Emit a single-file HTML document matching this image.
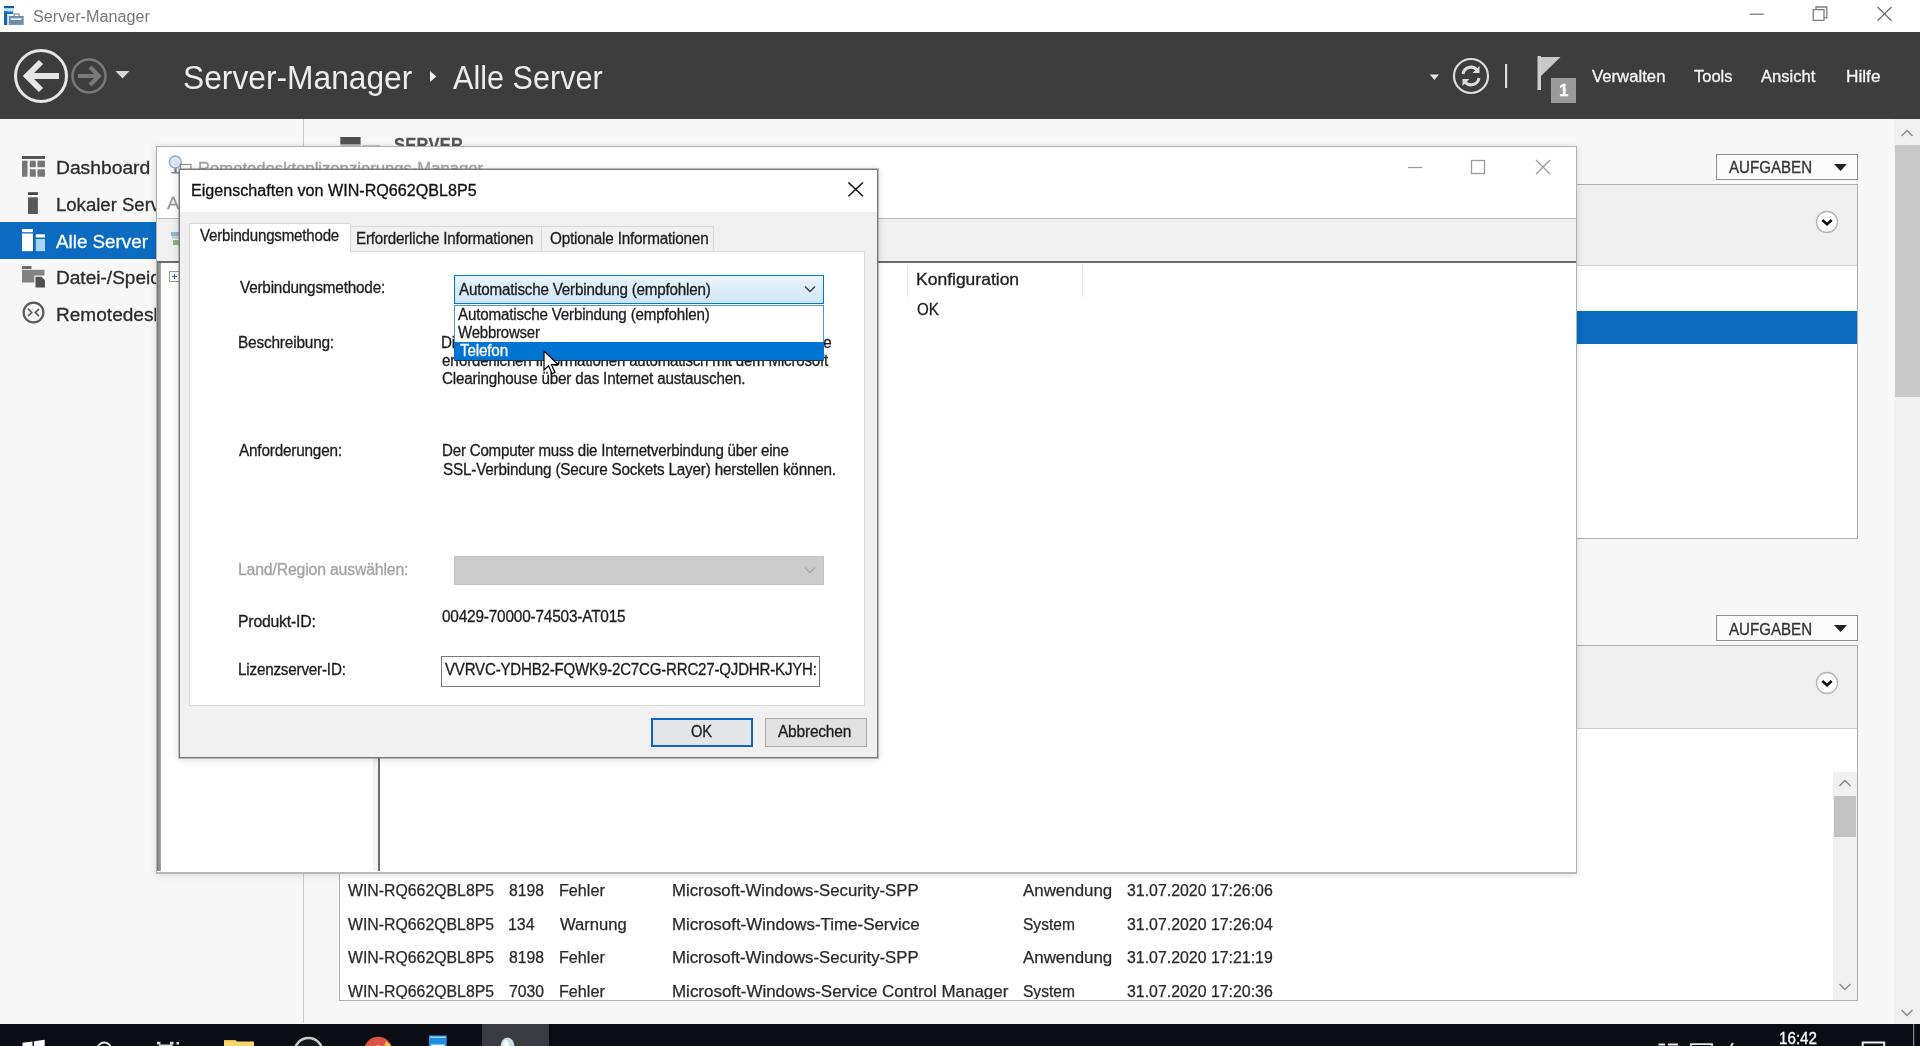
<!DOCTYPE html>
<html lang="de">
<head>
<meta charset="utf-8">
<title>Server-Manager</title>
<style>
*{box-sizing:border-box;margin:0;padding:0}
html,body{width:1920px;height:1046px;overflow:hidden;background:#f7f7f7;font-family:"Liberation Sans",sans-serif;color:#222}
.a{position:absolute}
.t{position:absolute;white-space:nowrap;transform-origin:0 50%;line-height:1;-webkit-text-stroke:.3px currentColor}
#titlebar{left:0;top:0;width:1920px;height:32px;background:#fff}
#header{left:0;top:32px;width:1920px;height:87px;background:#3d3d3d}
#content{left:0;top:119px;width:1920px;height:904px;background:#f7f7f7}
#sidebar{left:0;top:119px;width:304px;height:904px;background:#f7f7f7;border-right:1px solid #c9c9c9}
#taskbar{left:0;top:1023.500px;width:1920px;height:23px;background:#0b0d15}
.nav{position:absolute;left:0;width:304px;height:36px}
.nav .t{left:56px;top:8px;font-size:18.7px;color:#2b2b2b}
.nav.sel{background:#0a6bc1}
.nav.sel .t{color:#fff}
.btn{width:142px;height:25.500px;border:1px solid #8f8f8f;background:#fbfbfb}
/* dialog text */
.d{position:absolute;white-space:nowrap;-webkit-text-stroke:.3px currentColor;font-size:16px;color:#1c1c1c;transform-origin:0 50%;line-height:18px;letter-spacing:-0.2px}
.ev{position:absolute;white-space:nowrap;-webkit-text-stroke:.25px currentColor;font-size:15.8px;color:#2a2a2a;line-height:20px;transform-origin:0 50%}
</style>
</head>
<body>
<div class="a" id="root" style="left:0;top:0;width:1920px;height:1046px;filter:blur(0.5px)">
<div class="a" style="left:-12px;top:-12px;width:1944px;height:44px;background:#fff"></div>
<div class="a" style="left:-12px;top:119px;width:1944px;height:910px;background:#f7f7f7"></div>
<div class="a" style="left:1894px;top:119px;width:38px;height:905px;background:#f0f0f0"></div>
<div class="a" style="left:1895px;top:145px;width:37px;height:252px;background:#c9c9c9"></div>
<div class="a" style="left:-12px;top:32px;width:1944px;height:87px;background:#3d3d3d"></div>
<div class="a" style="left:-12px;top:1023.500px;width:1944px;height:35px;background:#0b0d15"></div>
<div class="a" id="content">
<svg class="a" style="left:340px;top:17.600px" width="44" height="12"><rect x="0.300" y="0" width="20.300" height="7.400" fill="#505050"/><rect x="0.300" y="7.400" width="20.300" height="1.200" fill="#9a9a9a"/><rect x="22" y="8.300" width="18" height="1" fill="#aaa"/></svg>
<div class="t" id="c1" style="left:393.75px;top:17.96px;transform:scaleX(0.9420);font-size:17.5px;font-weight:bold;color:#555;letter-spacing:.3px">SERVER</div>
<!-- server tile -->
<div class="a" style="left:339px;top:65px;width:1519px;height:355px;background:#fff;border:1px solid #adadad"></div>
<div class="a" style="left:340px;top:66px;width:1517px;height:81px;background:#efefef;border-bottom:1px solid #cfcfcf"></div>
<div class="a" style="left:340px;top:192px;width:1517px;height:33px;background:#0a6bc1"></div>
<div class="a btn" style="left:1716px;top:35px"><div class="t" id="b1" style="left:11.50px;top:5.00px;transform:scaleX(0.9433);font-size:16px;color:#333">AUFGABEN</div><svg class="a" style="left:116px;top:8px" width="16" height="10"><path d="M1 1h13l-6.500 7z" fill="#222"/></svg></div>
<svg class="a" style="left:1815px;top:91px" width="24" height="24"><circle cx="12" cy="12" r="10.500" fill="#fff" stroke="#b5b5b5" stroke-width="1.300"/><path d="M7.300 10l4.700 4.200 4.700-4.200" fill="none" stroke="#111" stroke-width="2.600"/></svg>
<!-- events tile -->
<div class="a" style="left:339px;top:526px;width:1519px;height:356px;background:#fff;border:1px solid #adadad"></div>
<div class="a" style="left:340px;top:527px;width:1517px;height:82.500px;background:#efefef;border-bottom:1px solid #cfcfcf"></div>
<div class="a btn" style="left:1716px;top:496px"><div class="t" id="b2" style="left:11.50px;top:5.50px;transform:scaleX(0.9433);font-size:16px;color:#333">AUFGABEN</div><svg class="a" style="left:116px;top:8px" width="16" height="10"><path d="M1 1h13l-6.500 7z" fill="#222"/></svg></div>
<svg class="a" style="left:1815px;top:552px" width="24" height="24"><circle cx="12" cy="12" r="10.500" fill="#fff" stroke="#b5b5b5" stroke-width="1.300"/><path d="M7.300 10l4.700 4.200 4.700-4.200" fill="none" stroke="#111" stroke-width="2.600"/></svg>
<!-- inner scrollbar -->
<div class="a" style="left:1833px;top:653px;width:24px;height:228px;background:#f0f0f0"></div>
<div class="a" style="left:1834px;top:677px;width:22px;height:41px;background:#c2c2c2"></div>
<svg class="a" style="left:1837px;top:658px" width="16" height="12"><path d="M2.500 9l5.500-5.500L13.500 9" fill="none" stroke="#8a8a8a" stroke-width="1.500"/></svg>
<svg class="a" style="left:1837px;top:862px" width="16" height="12"><path d="M2.500 3l5.500 5.500L13.500 3" fill="none" stroke="#8a8a8a" stroke-width="1.500"/></svg>
<!-- main scrollbar -->
<div class="a" style="left:1894px;top:0;width:26px;height:904px;background:#f0f0f0"></div>
<div class="a" style="left:1895px;top:26px;width:25px;height:252px;background:#c9c9c9"></div>
<svg class="a" style="left:1899px;top:8px" width="16" height="12"><path d="M2.500 9l5.500-5.500L13.500 9" fill="none" stroke="#8a8a8a" stroke-width="1.500"/></svg>
<svg class="a" style="left:1899px;top:888px" width="16" height="12"><path d="M2.500 3l5.500 5.500L13.500 3" fill="none" stroke="#8a8a8a" stroke-width="1.500"/></svg>
</div>
<div class="a" id="sidebar">
<div class="nav" style="top:31px"><svg class="a" style="left:22px;top:6px" width="24" height="22"><rect x="0" y="0" width="23" height="3" fill="#555"/><rect x="0" y="4.700" width="5.500" height="16" fill="#767676"/><rect x="7.800" y="4.700" width="6" height="6.500" fill="#767676"/><rect x="15.500" y="4.700" width="7.500" height="6.500" fill="#767676"/><rect x="7.800" y="13.300" width="6" height="7.400" fill="#767676"/><rect x="15.500" y="13.300" width="7.500" height="7.400" fill="#767676"/></svg><div class="t" id="n1" style="left:56.18px;top:9.16px;transform:scaleX(1.0308)">Dashboard</div></div>
<div class="nav" style="top:68px"><svg class="a" style="left:27px;top:5px" width="12" height="24"><rect x="1" y="0.200" width="9.900" height="2.800" fill="#444"/><rect x="1" y="5.300" width="9.900" height="16.700" fill="#595959"/></svg><div class="t" id="n2" style="left:56.21px;top:9.35px;transform:scaleX(0.9920)">Lokaler Server</div></div>
<div class="nav sel" style="top:103.200px;height:36.400px"><svg class="a" style="left:22px;top:6.600px" width="24" height="24"><rect x="0" y="0" width="11" height="3.200" fill="#fff"/><rect x="0" y="4.500" width="11" height="17.700" fill="#fff"/><rect x="13.800" y="5.300" width="9.200" height="3.200" fill="#fff"/><rect x="13.800" y="10" width="9.200" height="12.200" fill="#a9d3f5"/></svg><div class="t" id="n3" style="left:56.30px;top:10.57px;transform:scaleX(1.0058)">Alle Server</div></div>
<div class="nav" style="top:141px"><svg class="a" style="left:22px;top:5.700px" width="25" height="24"><rect x="0" y="0" width="9.500" height="3" fill="#6b6b6b"/><rect x="0" y="3.800" width="22.500" height="12.700" fill="#828282"/><rect x="12.300" y="9.500" width="11.700" height="13" fill="#f7f7f7"/><path d="M13.500 10.700h6l3.500 3.500v7.400h-9.500z" fill="#505050"/></svg><div class="t" id="n4" style="left:56.19px;top:9.16px;transform:scaleX(1.0200)">Datei-/Speicherdienste</div></div>
<div class="nav" style="top:178px"><svg class="a" style="left:21.700px;top:4.200px" width="24" height="24"><circle cx="11.500" cy="11.500" r="9.900" fill="none" stroke="#5a5a5a" stroke-width="2.200"/><path d="M6 7.800l3.700 3.700-3.700 3.700M17 7.800l-3.700 3.700 3.700 3.700" fill="none" stroke="#5a5a5a" stroke-width="1.700"/></svg><div class="t" id="n5" style="left:56.19px;top:8.85px;transform:scaleX(1.0200)">Remotedesktopdienste</div></div>
</div>
<div class="a" id="events" style="left:340px;top:870px;width:1493px;height:128.600px;overflow:hidden">
<div class="ev" id="e00" style="left:7.50px;top:10.75px;transform:scaleX(1.0021)">WIN-RQ662QBL8P5</div><div class="ev" id="e01" style="left:169.25px;top:10.75px;transform:scaleX(0.9970)">8198</div><div class="ev" id="e02" style="left:218.99px;top:10.75px;transform:scaleX(1.0226)">Fehler</div><div class="ev" id="e03" style="left:332.25px;top:10.75px;transform:scaleX(1.0603)">Microsoft-Windows-Security-SPP</div><div class="ev" id="e04" style="left:683.30px;top:10.75px;transform:scaleX(1.0695)">Anwendung</div><div class="ev" id="e05" style="left:787.30px;top:10.75px;transform:scaleX(1.0058)">31.07.2020 17:26:06</div>
<div class="ev" id="e10" style="left:7.50px;top:44.50px;transform:scaleX(1.0021)">WIN-RQ662QBL8P5</div><div class="ev" id="e11" style="left:168.25px;top:44.50px;transform:scaleX(1.0070)">134</div><div class="ev" id="e12" style="left:220.00px;top:44.50px;transform:scaleX(1.0522)">Warnung</div><div class="ev" id="e13" style="left:332.24px;top:44.50px;transform:scaleX(1.0710)">Microsoft-Windows-Time-Service</div><div class="ev" id="e14" style="left:683.30px;top:44.50px;transform:scaleX(0.9846)">System</div><div class="ev" id="e15" style="left:787.30px;top:44.50px;transform:scaleX(1.0058)">31.07.2020 17:26:04</div>
<div class="ev" id="e20" style="left:7.50px;top:78.25px;transform:scaleX(1.0021)">WIN-RQ662QBL8P5</div><div class="ev" id="e21" style="left:169.25px;top:78.25px;transform:scaleX(0.9970)">8198</div><div class="ev" id="e22" style="left:218.99px;top:78.25px;transform:scaleX(1.0226)">Fehler</div><div class="ev" id="e23" style="left:332.25px;top:78.25px;transform:scaleX(1.0603)">Microsoft-Windows-Security-SPP</div><div class="ev" id="e24" style="left:683.30px;top:78.25px;transform:scaleX(1.0695)">Anwendung</div><div class="ev" id="e25" style="left:787.30px;top:78.25px;transform:scaleX(1.0058)">31.07.2020 17:21:19</div>
<div class="ev" id="e30" style="left:7.50px;top:112.00px;transform:scaleX(1.0021)">WIN-RQ662QBL8P5</div><div class="ev" id="e31" style="left:169.25px;top:112.00px;transform:scaleX(0.9970)">7030</div><div class="ev" id="e32" style="left:218.99px;top:112.00px;transform:scaleX(1.0226)">Fehler</div><div class="ev" id="e33" style="left:332.24px;top:112.00px;transform:scaleX(1.0732)">Microsoft-Windows-Service Control Manager</div><div class="ev" id="e34" style="left:683.30px;top:112.00px;transform:scaleX(0.9846)">System</div><div class="ev" id="e35" style="left:787.30px;top:112.00px;transform:scaleX(1.0058)">31.07.2020 17:20:36</div>
</div>
<div class="a" id="rdwin" style="left:156px;top:146px;width:1421px;height:728px;background:#fff;border:1px solid #b0b0b0;border-bottom:2px solid #b8b8b8;box-shadow:0 1px 7px rgba(0,0,0,.13)">
<svg class="a" style="left:10px;top:8px" width="26" height="24"><rect x="7.300" y="12" width="2.400" height="6" fill="#6f7f8f"/><rect x="4.500" y="17" width="8" height="1.600" fill="#8a8a8a"/><circle cx="8.300" cy="7" r="6" fill="#d6e8f4" stroke="#92a8bd" stroke-width="1.400"/><rect x="13.500" y="9.500" width="10.500" height="8" fill="#fff" stroke="#8e8e8e" stroke-width="1.200"/></svg>
<div class="t" id="r1" style="left:40.97px;top:14.10px;transform:scaleX(1.0408);font-size:16px;color:#a2a2a2">Remotedesktoplizenzierungs-Manager</div>
<svg class="a" style="left:1240px;top:4px" width="170" height="32" fill="none" stroke="#9a9a9a" stroke-width="1.300"><path d="M11 16.500h14"/><rect x="74.500" y="9.500" width="13" height="13"/><path d="M139 9l14 14M153 9l-14 14"/></svg>
<div class="t" id="r2" style="left:10.25px;top:48.71px;transform:scaleX(1.1500);font-size:16px;color:#999">Aktion</div>
<div class="a" style="left:0;top:71px;width:1419px;height:44px;background:#f0f0f0;border-top:1px solid #b8b8b8"></div>
<div class="a" style="left:0;top:114px;width:1419px;height:2px;background:#6a6a6a"></div>
<svg class="a" style="left:13px;top:84px" width="12" height="18"><rect x="1" y="1" width="9" height="4" fill="#8fb3d1"/><rect x="2" y="5.500" width="8" height="2" fill="#b9c4cc"/><rect x="3" y="9" width="7" height="5" fill="#8db37a"/></svg>
<div class="a" style="left:0;top:116px;width:3.500px;height:608px;background:linear-gradient(90deg,#777,#a8a8a8)"></div>
<div class="a" style="left:215.500px;top:117px;width:5px;height:607px;background:#f4f4f4"></div><div class="a" style="left:220.500px;top:117px;width:2.800px;height:607px;background:#6e6e6e"></div>
<svg class="a" style="left:12px;top:124px" width="12" height="12"><rect x="0.500" y="0.500" width="10" height="10" fill="#fff" stroke="#9a9a9a"/><path d="M3 5.500h5M5.500 3v5" stroke="#3a5fa8" stroke-width="1.200"/></svg>
<div class="a" style="left:750px;top:118px;width:1px;height:32px;background:#e5e5e5"></div>
<div class="a" style="left:925px;top:118px;width:1px;height:32px;background:#e5e5e5"></div>
<div class="t" id="r3" style="left:758.85px;top:123.75px;transform:scaleX(1.0603);font-size:16.500px;color:#222">Konfiguration</div>
<div class="t" id="r4" style="left:759.91px;top:154.36px;transform:scaleX(0.9167);font-size:16.500px;color:#222">OK</div>
</div>
<div class="a" id="dlg" style="left:179px;top:169px;width:699px;height:589px;background:#f0f0f0;border:1px solid #787878;box-shadow:0 0 0 1px rgba(120,120,120,.45),0 1px 8px rgba(0,0,0,.16)">
<div class="a" style="left:0;top:0;width:697px;height:42px;background:#fff"></div>
<div class="t" id="d0" style="left:10.61px;top:12.80px;transform:scaleX(1.0067);font-size:16px;color:#111">Eigenschaften von WIN-RQ662QBL8P5</div>
<svg class="a" style="left:667px;top:12px" width="18" height="18"><path d="M1.400 0.500L16 14.250M16 0.500L1.400 14.250" stroke="#1a1a1a" stroke-width="1.600" fill="none"/></svg>
<!-- tab page -->
<div class="a" style="left:9px;top:81px;width:676px;height:455px;background:#fff;border:1px solid #dadada"></div>
<div class="a" style="left:170px;top:55.500px;width:192px;height:26.500px;background:#f0f0f0;border:1px solid #d9d9d9"></div>
<div class="a" style="left:361px;top:55.500px;width:172.500px;height:26.500px;background:#f0f0f0;border:1px solid #d9d9d9"></div>
<div class="a" style="left:9px;top:53px;width:162px;height:30px;background:#fff;border:1px solid #dadada;border-bottom:none"></div>
<div class="d" id="d1" style="left:19.71px;top:57.11px;transform:scaleX(0.9417)">Verbindungsmethode</div>
<div class="d" id="d2" style="left:176.26px;top:59.50px;transform:scaleX(0.9452)">Erforderliche Informationen</div>
<div class="d" id="d3" style="left:369.61px;top:59.50px;transform:scaleX(0.9536)">Optionale Informationen</div>
<!-- form -->
<div class="d" id="d4" style="left:59.61px;top:108.91px;transform:scaleX(0.9547)">Verbindungsmethode:</div>
<div class="d" id="d5" style="left:58.04px;top:164.00px;transform:scaleX(0.9626)">Beschreibung:</div>
<div class="d" id="d6" style="left:261.26px;top:163.71px;transform:scaleX(0.9504)">Dies ist die empfohlene Methode. Der Lizenzserver wird die</div>
<div class="d" id="d7" style="left:261.71px;top:181.71px;transform:scaleX(0.9416)">erforderlichen Informationen automatisch mit dem Microsoft</div>
<div class="d" id="d8" style="left:262.00px;top:199.50px;transform:scaleX(0.9492)">Clearinghouse über das Internet austauschen.</div>
<div class="d" id="d9" style="left:59.21px;top:271.71px;transform:scaleX(0.9571)">Anforderungen:</div>
<div class="d" id="d10" style="left:262.37px;top:271.50px;transform:scaleX(0.9423)">Der Computer muss die Internetverbindung über eine</div>
<div class="d" id="d11" style="left:263.30px;top:290.50px;transform:scaleX(0.9532)">SSL-Verbindung (Secure Sockets Layer) herstellen können.</div>
<div class="d" id="d12" style="left:58.22px;top:390.71px;transform:scaleX(0.9912);color:#a3a3a3">Land/Region auswählen:</div>
<div class="a" style="left:274px;top:386px;width:370px;height:29px;background:#cccccc;border:1px solid #c2c2c2"></div>
<svg class="a" style="left:623px;top:395px" width="14" height="10"><path d="M2 2.500l5 5 5-5" fill="none" stroke="#aaa" stroke-width="1.300"/></svg>
<div class="d" id="d13" style="left:58.22px;top:442.50px;transform:scaleX(0.9860)">Produkt-ID:</div>
<div class="d" id="d14" style="left:261.61px;top:438.30px;transform:scaleX(0.9612)">00429-70000-74503-AT015</div>
<div class="d" id="d15" style="left:58.25px;top:490.71px;transform:scaleX(0.9511)">Lizenzserver-ID:</div>
<div class="a" style="left:261px;top:486px;width:379px;height:31px;background:#fff;border:1px solid #7a7a7a"></div>
<div class="d" id="d16" style="left:265.00px;top:490.71px;transform:scaleX(0.9409)">VVRVC-YDHB2-FQWK9-2C7CG-RRC27-QJDHR-KJYH:</div>
<!-- combo -->
<div class="a" style="left:273.500px;top:104.500px;width:370.500px;height:29.500px;border:1px solid #0078d7;background:linear-gradient(#eaf4fc,#cfe5f8)"></div>
<div class="d" id="d17" style="left:279.30px;top:110.50px;transform:scaleX(0.9489)">Automatische Verbindung (empfohlen)</div>
<svg class="a" style="left:623px;top:114px" width="14" height="10"><path d="M2 2.500l5 5 5-5" fill="none" stroke="#333" stroke-width="1.300"/></svg>
<div class="a" style="left:273.500px;top:134.500px;width:370.500px;height:56.500px;border:1px solid #4a97da;border-bottom:1.500px solid #2a3848;background:#fff"></div>
<div class="a" style="left:273.500px;top:172.300px;width:370.500px;height:17.500px;background:#0074d2"></div>
<div class="d" id="d18" style="left:278.00px;top:136.30px;transform:scaleX(0.9486)">Automatische Verbindung (empfohlen)</div>
<div class="d" id="d19" style="left:278.00px;top:153.50px;transform:scaleX(0.9345)">Webbrowser</div>
<div class="d" id="d20" style="left:280.00px;top:171.50px;transform:scaleX(0.9556);color:#fff">Telefon</div>
<!-- buttons -->
<div class="a" style="left:471px;top:547.500px;width:102px;height:29.500px;background:#e3e5e8;border:2px solid #0a66c2"></div>
<div class="d" id="d21" style="left:510.71px;top:552.71px;transform:scaleX(0.9163)">OK</div>
<div class="a" style="left:584.500px;top:547.500px;width:102.500px;height:29.500px;background:#e1e1e1;border:1px solid #adadad"></div>
<div class="d" id="d22" style="left:598.30px;top:552.71px;transform:scaleX(0.9667)">Abbrechen</div>
<!-- cursor -->
<svg class="a" style="left:362.700px;top:179.500px" width="20" height="28" viewBox="0 0 20 28"><path d="M1 1v19l4.500-4.300 3.500 8 3-1.300-3.500-7.900H15z" fill="#fff" stroke="#000" stroke-width="1.200"/></svg>
</div>
<div class="a" id="titlebar">
<svg class="a" style="left:0;top:0" width="28" height="28" viewBox="0 0 28 28">
<rect x="4" y="6" width="10" height="2.400" fill="#0c5fa3"/><rect x="4" y="8.400" width="10" height="3" fill="#bfe3fb"/><rect x="4" y="11.400" width="9.200" height="2.600" fill="#1a74c4"/><rect x="4" y="11.400" width="3.400" height="13.600" fill="#1267b3"/><rect x="7.400" y="14" width="1.600" height="11" fill="#cfeafc"/>
<path d="M14.200 16v-2.200h4.800V16" fill="none" stroke="#8099b3" stroke-width="1.300"/><rect x="9" y="16" width="14.700" height="8.900" fill="#6f8cab"/><path d="M10.300 18.300h11.800l-1.200 1.800h-9.400z" fill="#f4f8fb"/>
</svg>
<div class="t" id="tt" style="left:32.50px;top:8.50px;transform:scaleX(1.0105);font-size:16px;-webkit-text-stroke:0;color:#787878">Server-Manager</div>
<svg class="a" style="left:1740px;top:0" width="180" height="32" viewBox="0 0 180 32" fill="none" stroke="#7d7d7d" stroke-width="1.300">
<path d="M9.700 14.200h14" />
<rect x="73.200" y="9.600" width="10.800" height="10.800"/><path d="M76 9.600v-2.600h10.800v10.800h-2.800"/>
<path d="M137.500 7l14 13.800M151.500 7l-14 13.800" stroke="#6e6e6e" stroke-width="1.300"/>
</svg>
</div>
<div class="a" id="header">
<svg class="a" style="left:0;top:0" width="180" height="87" viewBox="0 0 180 87">
<circle cx="41" cy="44" r="25.5" fill="none" stroke="#e6e6e6" stroke-width="3"/>
<path d="M59 44H28M41 30L27 44l14 14" fill="none" stroke="#e6e6e6" stroke-width="6" />
<circle cx="89" cy="44" r="16.5" fill="none" stroke="#7a7a7a" stroke-width="2.5"/>
<path d="M78 44h20M90 35l9 9-9 9" fill="none" stroke="#7a7a7a" stroke-width="4"/>
<path d="M115.500 39h14l-7 7.500z" fill="#d6d6d6"/>
</svg>
<div class="t" id="h1" style="left:182.81px;top:29.25px;transform:scaleX(0.9475);font-size:33.5px;-webkit-text-stroke:0;color:#ececec">Server-Manager</div>
<svg class="a" style="left:427px;top:37px" width="12" height="16"><path d="M3 2l6.300 5.500L3 13z" fill="#efefef"/></svg>
<div class="t" id="h2" style="left:453.00px;top:29.25px;transform:scaleX(0.9134);font-size:33.5px;-webkit-text-stroke:0;color:#ececec">Alle Server</div>
<svg class="a" style="left:1420px;top:10px" width="170" height="70" viewBox="0 0 170 70">
<path d="M9.800 32.500h9.200l-4.600 5.600z" fill="#e6e6e6"/>
<circle cx="51" cy="34" r="17" fill="none" stroke="#dcdcdc" stroke-width="2.200"/>
<path d="M43 32a8 8 0 0 1 14-4M59 36a8 8 0 0 1-14 4" fill="none" stroke="#dcdcdc" stroke-width="3"/>
<path d="M59.500 24v7h-7zM42.500 44v-7h7z" fill="#dcdcdc"/>
<rect x="85" y="22" width="2.200" height="24" fill="#dcdcdc"/>
<rect x="117.500" y="14" width="3.500" height="34" fill="#cfcfcf"/>
<path d="M121 15h19.500L121 34z" fill="#c9c9c9"/>
<rect x="131" y="36" width="25" height="25" fill="#9b9b9b"/>
</svg>
<div class="t" style="left:1559px;top:50px;font-size:17px;color:#fff;font-weight:bold">1</div>
<div class="t" id="m1" style="left:1592.00px;top:37.00px;transform:scaleX(1.0452);font-size:16px;color:#f4f4f4">Verwalten</div>
<div class="t" id="m2" style="left:1694.00px;top:37.00px;transform:scaleX(1.0307);font-size:16px;color:#f4f4f4">Tools</div>
<div class="t" id="m3" style="left:1761.00px;top:37.00px;transform:scaleX(1.0373);font-size:16px;color:#f4f4f4">Ansicht</div>
<div class="t" id="m4" style="left:1845.93px;top:37.00px;transform:scaleX(1.0768);font-size:16px;color:#f4f4f4">Hilfe</div>
</div>
<div class="a" id="taskbar">
<div class="a" style="left:482px;top:0;width:67px;height:23px;background:#393b40"></div>
<svg class="a" style="left:0;top:0" width="640" height="23" viewBox="0 0 640 23">
<path d="M22.500 18.800l10-1.400V23h-10zM34 17.200l10.700-1.500V23H34z" fill="#fff"/>
<circle cx="104.200" cy="25.500" r="7" fill="none" stroke="#e6e6e6" stroke-width="1.800"/>
<rect x="157" y="17.800" width="3.500" height="2.700" fill="#ddd"/><rect x="159" y="20.500" width="13.500" height="2.500" fill="#ddd"/><rect x="170" y="17.800" width="3.500" height="2.700" fill="#ddd"/><rect x="176.500" y="18" width="2.500" height="2.500" fill="#ddd"/>
<path d="M224 16h11l2 1.500h17V23H224z" fill="#f6d66e"/><path d="M224 16h11l2 1.500h-13z" fill="#e9bd4a"/>
<circle cx="308.500" cy="28" r="14" fill="#15171d" stroke="#c9c9c9" stroke-width="2.600"/>
<path d="M364 27a14.200 14.200 0 0 1 28.400 0z" fill="#dd5144"/><path d="M386 17a14 14 0 0 1 6.400 10h-10z" fill="#f2c94c"/><path d="M372.500 27a5.700 5.700 0 0 1 11.400 0z" fill="#e9eef5"/>
<rect x="429" y="11.500" width="17.700" height="12" fill="#1f8fe3"/><rect x="430" y="12.500" width="15.700" height="1.500" fill="#a8d4f5"/><rect x="431" y="20.500" width="13.700" height="1.500" fill="#e8f3fc"/>
<ellipse cx="507.500" cy="23" rx="7" ry="9.500" fill="#c9dce8"/><ellipse cx="506" cy="21" rx="3" ry="5" fill="#f3f8fb"/>
</svg>
<svg class="a" style="left:1640px;top:0" width="280" height="23" viewBox="0 0 280 23">
<path d="M18.500 20.500h6.500M28 20.500h10" stroke="#e8e8e8" stroke-width="1.800" fill="none"/>
<path d="M51 23v-2.800h21V23" stroke="#e8e8e8" stroke-width="1.800" fill="none"/><path d="M90.500 23l2.500-4" stroke="#e8e8e8" stroke-width="1.800"/>
<path d="M222.700 23v-4.500h21.500V23" stroke="#f0f0f0" stroke-width="2" fill="none"/>
<rect x="273" y="0" width="1.200" height="23" fill="#8a8a8a"/>
</svg>
<div class="t" id="tk" style="left:1779.11px;top:6.80px;transform:scaleX(0.8932);font-size:17px;color:#fff">16:42</div>
</div>
</div>
</body>
</html>
